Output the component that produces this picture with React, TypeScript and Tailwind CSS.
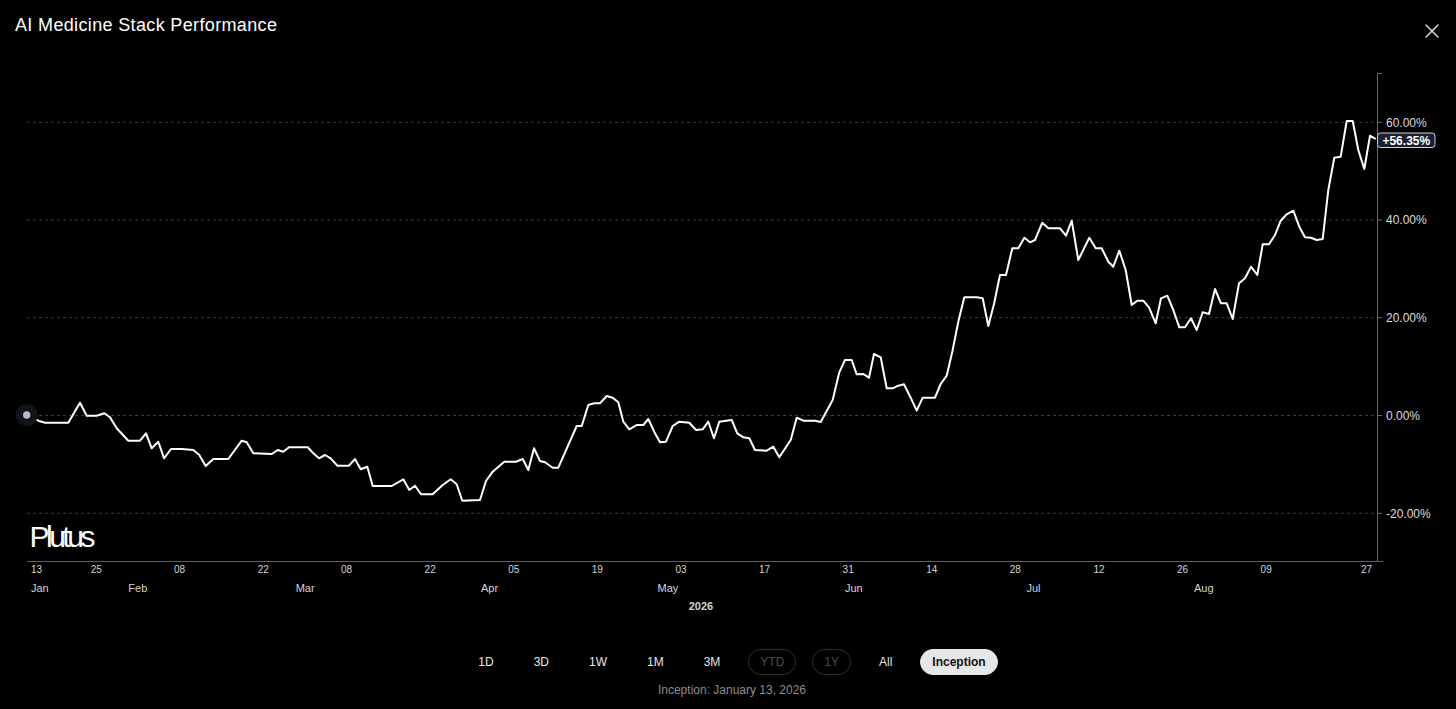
import { X } from 'lucide-react';

const pts: [number, number][] = [
  [26.7, 415], [31.7, 416], [38.3, 420.7], [45, 422.7], [68.3, 422.7], [80, 402.7], [86.7, 415.7], [96.7, 415.7],
  [104.3, 413.3], [110, 417.3], [116.7, 428.3], [128.3, 440.7], [140, 440.7], [146, 433.3], [151.7, 448.3],
  [158.3, 441.7], [164, 458.3], [171, 449], [181.7, 449], [193.3, 450], [199.3, 455], [205.7, 466], [213.3, 459],
  [228.3, 459], [241.7, 440.7], [246.7, 442.3], [253.3, 453.3], [271.7, 454], [277.7, 450], [283.3, 451.7],
  [289, 447.3], [307.7, 447.3], [313.3, 453.3], [319, 458.3], [325, 455], [330.7, 458.3], [337.3, 465.7],
  [349, 465.7], [355, 459], [360.7, 469.3], [367.3, 466.7],
  [372.7, 486], [391.7, 486], [403.3, 479.3], [409.3, 490], [415, 485.7], [421, 494.3], [432.7, 494.3],
  [442.7, 485], [450.7, 479.3], [456.7, 484.3], [462.3, 500.7], [480, 500], [486, 481], [492.7, 471.7],
  [504.3, 461.7], [516, 461.7], [522.7, 459], [528.3, 470], [534, 448.3], [540, 461], [545, 462.3],
  [552.7, 467.7], [558.3, 467.7], [576.7, 426], [581.7, 426], [588.3, 405], [594.3, 403.3], [600, 403.3],
  [606.7, 396], [612.7, 397.7], [618.3, 402.3], [623.3, 421.7], [629.3, 429.3], [636.7, 425], [643.3, 425],
  [648.3, 419], [655, 433.3], [660, 442.3], [666, 441.7], [672.7, 426], [679.3, 421.7], [689.3, 422.7],
  [696, 430], [702.7, 429.3], [708.3, 421.7], [714, 438.3], [719.3, 421.7],
  [731.7, 420], [737.3, 433.3], [743.3, 437.3], [749.3, 438.3], [755, 450], [766.7, 450.7], [773.3, 446.7],
  [779.3, 457.3], [790.7, 440], [796.7, 417.7], [803.3, 420.7], [815, 420.7], [820.7, 422], [832.7, 400],
  [839.3, 372.3], [845, 360], [851.7, 360], [856.7, 374.3], [863.3, 374], [869, 377.7], [874, 354],
  [880.7, 357.3], [886.7, 388.3], [892.7, 388.3], [898.3, 385.7], [904, 384.3], [910.7, 397.7],
  [916.7, 410.7], [922.7, 397.7], [935, 397.7], [940.7, 384], [946.7, 375.7], [952.3, 351.7], [958.3, 321.7],
  [964.3, 297.3], [976.7, 297.3], [982.7, 298.3], [988.3, 326], [994, 304], [1000, 275], [1006, 275],
  [1012.3, 248.3], [1018.3, 248.3], [1024.3, 237.7], [1030, 242.3], [1035, 240],
  [1042.3, 222.7], [1048.3, 228.3], [1060, 228.3], [1066, 235.7], [1071.7, 220.7], [1078.3, 260],
  [1089.3, 237.7], [1095.7, 248.3], [1101.7, 248.3], [1108.3, 261.7], [1113.3, 266.7], [1119.3, 250.7],
  [1125.7, 270], [1131.7, 305], [1137.3, 300.7], [1143.3, 300.7], [1149, 307.3], [1155.7, 323.3],
  [1161, 298.3], [1167.3, 295.7], [1173.3, 310], [1179.3, 327.3], [1185, 327.3], [1191, 318.3],
  [1196.7, 330], [1202.7, 312.3], [1209, 314], [1215, 289], [1221, 303.3], [1226.7, 303.3], [1232.7, 319],
  [1239, 283.3], [1245, 278.3], [1251, 266.7], [1257.3, 275], [1262.7, 244.3], [1269, 244.3], [1275, 235],
  [1280.7, 220.7], [1286.7, 214.3], [1293.3, 210.7], [1299.3, 226.7], [1305, 237.3], [1311, 237.7],
  [1316.7, 240], [1322.7, 239], [1328.3, 190], [1334.3, 157.7], [1340.7, 156.7], [1346.7, 121],
  [1352.7, 121], [1358.3, 150], [1364.3, 169], [1370, 135.7], [1375.7, 139],
];

const yTicks = [
  { label: '60.00%', y: 122.3 },
  { label: '40.00%', y: 220 },
  { label: '20.00%', y: 317.7 },
  { label: '0.00%', y: 415.5 },
  { label: '-20.00%', y: 513.3 },
];

const days = [
  ['13', 31], ['25', 90.7], ['08', 174], ['22', 257.7], ['08', 341], ['22', 424.6], ['05', 508.2],
  ['19', 591.8], ['03', 675.4], ['17', 759], ['31', 842.6], ['14', 926.2], ['28', 1009.8], ['12', 1093.4],
  ['26', 1177], ['09', 1260.6], ['27', 1361],
] as const;

const months = [
  ['Jan', 31], ['Feb', 128.3], ['Mar', 295.7], ['Apr', 481], ['May', 657.5], ['Jun', 845],
  ['Jul', 1026.5], ['Aug', 1194],
] as const;

const ranges = [
  { label: '1D' }, { label: '3D' }, { label: '1W' }, { label: '1M' }, { label: '3M' },
  { label: 'YTD', disabled: true }, { label: '1Y', disabled: true }, { label: 'All' },
  { label: 'Inception', active: true },
];

function Chart() {
  const line = pts.map(([x, y], i) => `${i ? 'L' : 'M'}${x} ${y}`).join(' ');
  return (
    <svg width={1456} height={570} viewBox="0 50 1456 570" className="block">
      {yTicks.map((t) => (
        <g key={t.label}>
          <line x1={27} x2={1377} y1={t.y} y2={t.y} stroke="#3a3a3a" strokeDasharray="3 3" />
          <line x1={1377} x2={1382} y1={t.y} y2={t.y} stroke="#6b6b6b" />
          <text x={1386} y={t.y + 4.3} fontSize={12} fill="#dcdcdc">{t.label}</text>
        </g>
      ))}
      <line x1={1377.5} x2={1377.5} y1={73} y2={562} stroke="#6b6b6b" />
      <line x1={1377} x2={1382} y1={73.5} y2={73.5} stroke="#6b6b6b" />
      <line x1={27} x2={1383} y1={561.5} y2={561.5} stroke="#5f5f5f" />

      {days.map(([d, x], i) => (
        <text key={i} x={x} y={572.8} fontSize={10} fill="#d4d4d4">{d}</text>
      ))}
      {months.map(([m, x]) => (
        <text key={m} x={x} y={592.2} fontSize={11} fill="#d4d4d4">{m}</text>
      ))}
      <text x={701} y={610} fontSize={11} fontWeight={700} fill="#d4d4d4" textAnchor="middle">2026</text>

      <text x={29.5} y={546.7} fontSize={30} fill="#ffffff" letterSpacing={-3.5}>Plutus</text>

      <path d={line} fill="none" stroke="#ffffff" strokeWidth={2} strokeLinejoin="round" />

      <circle cx={26.7} cy={415} r={11} fill="#10141b" />
      <circle cx={26.7} cy={415} r={3.7} fill="#b9bdca" />

      <rect x={1377.5} y={133} width={57.5} height={14.5} rx={3} fill="#1b2030" stroke="#cfd3da" />
      <text x={1406.3} y={144.5} fontSize={12} fontWeight={700} fill="#ffffff" textAnchor="middle">+56.35%</text>
    </svg>
  );
}

export default function App() {
  return (
    <div className="w-[1456px] h-[709px] bg-black text-white font-['Liberation_Sans',Arial,sans-serif] overflow-hidden">
      <header className="h-[50px] flex justify-between items-start pl-[15px] pr-[12px]">
        <h1 className="pt-[14px] text-[18px] leading-[22px] tracking-[0.35px] font-normal">AI Medicine Stack Performance</h1>
        <X size={24} strokeWidth={1.6} className="mt-[19px] text-[#d0d0d0]" />
      </header>

      <Chart />

      <div className="mt-[29px] flex justify-center gap-[16px] pl-[8px]">
        {ranges.map((r) => (
          <button
            key={r.label}
            className={
              r.active
                ? 'h-[26px] px-[11px] rounded-full border border-[#e5e7eb] bg-[#e5e7eb] text-[#111] text-[12px] font-bold'
                : r.disabled
                  ? 'h-[26px] px-[11px] rounded-full border border-[#2e2e2e] text-[#4d4d4d] text-[12px]'
                  : 'h-[26px] px-[11px] rounded-full border border-transparent text-[#e6e6e6] text-[12px]'
            }
          >
            {r.label}
          </button>
        ))}
      </div>
      <p className="mt-[7px] pl-[8px] text-center text-[12px] leading-[16px] text-[#8c8c8c]">Inception: January 13, 2026</p>
    </div>
  );
}
